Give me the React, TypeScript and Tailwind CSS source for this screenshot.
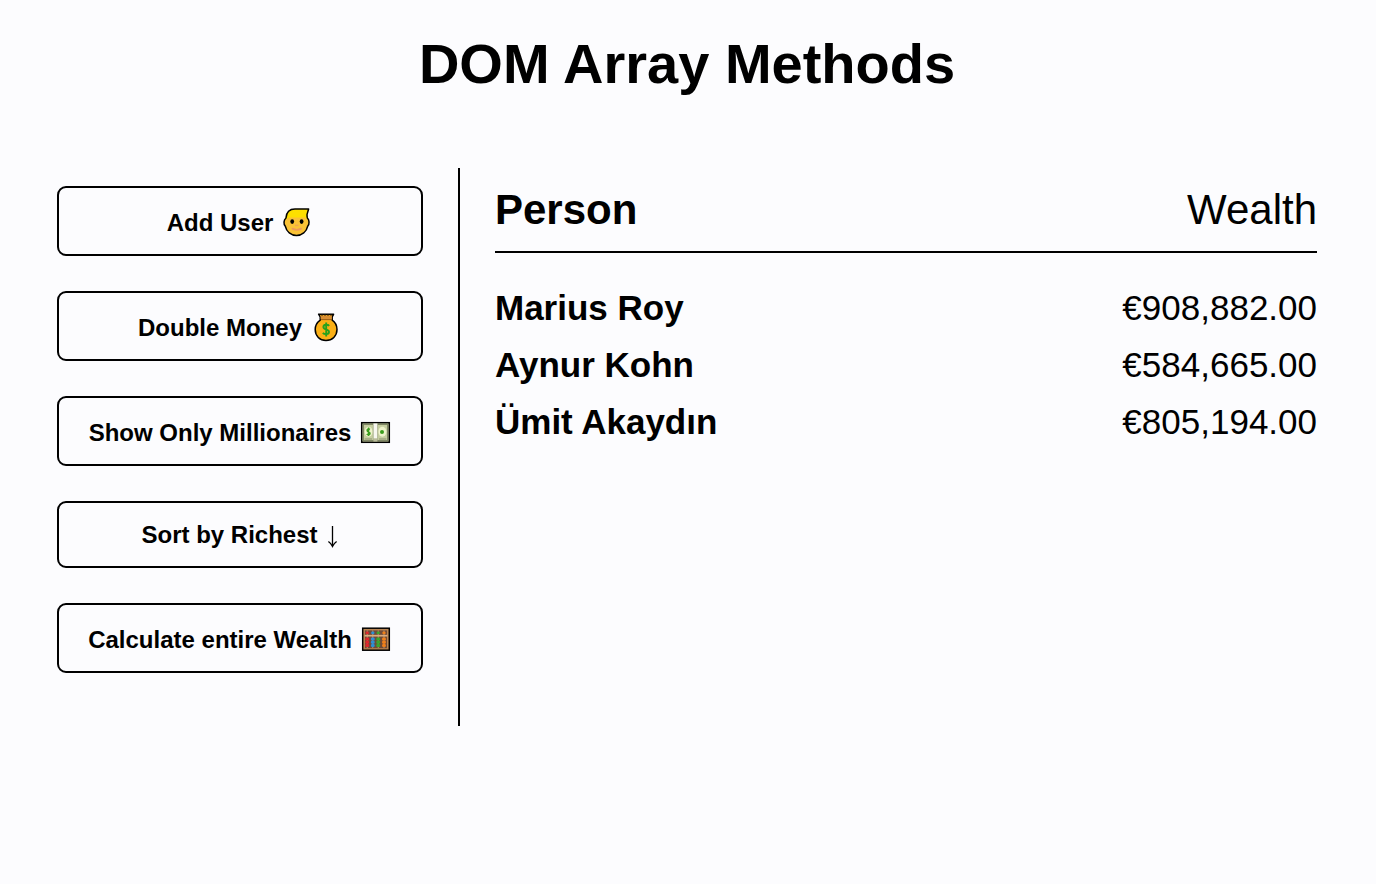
import type { ReactNode } from "react";

const iconClass = "h-[29px] w-8 shrink-0";

function FaceIcon() {
  return (
    <svg viewBox="0 0 32 29" className={iconClass} aria-hidden="true">
      <path
        d="M5 10C2.6 12 2.4 16 4.2 18C5.6 23.8 10 27.4 15.5 27.4C21 27.4 25.4 23.8 26.8 18C28.6 16 28.4 12 26.4 10L24.5 6H8Z"
        fill="#fac236"
      />
      <path d="M4.6 11.5C4.4 4.5 8.5 1 14 1H27.6L26.2 7.2L26.8 12L24 9.6H8Z" fill="#fde000" />
      <path
        d="M5 10C5.4 4.2 9 1 14 1H27.6L26 6.6C26 8 26.1 9 26.4 10C28.4 12 28.6 16 26.8 18C25.4 23.8 21 27.4 15.5 27.4C10 27.4 5.6 23.8 4.2 18C2.4 16 2.6 12 5 10Z"
        fill="none"
        stroke="#000"
        strokeWidth="1.5"
        strokeLinejoin="round"
      />
      <ellipse cx="11.2" cy="13.6" rx="1.9" ry="2.3" />
      <ellipse cx="20.6" cy="13.6" rx="1.9" ry="2.3" />
      <path d="M11.5 20.6Q15.7 23 20 20.6" fill="none" stroke="#ee9a5c" strokeWidth="1.8" strokeLinecap="round" />
      <path d="M14 17.4H17.4" stroke="#f0a552" strokeWidth="1.4" />
    </svg>
  );
}

function MoneyBagIcon() {
  return (
    <svg viewBox="0 0 32 29" className={iconClass} aria-hidden="true">
      <path
        d="M8.6 1.2H23.6L22.2 4V7.2C25.4 9.4 27 12.8 27 16.6C27 23 22.2 27.5 16 27.5C9.8 27.5 5.2 23 5.2 16.6C5.2 12.8 7.2 9.4 10.2 7.2V4Z"
        fill="#fbb016"
        stroke="#000"
        strokeWidth="1.5"
        strokeLinejoin="round"
      />
      <path d="M10.6 2.6H21.8V6.2H10.6Z" fill="#d98e32" />
      <path d="M12 1.4V3M15 1.4V3M18 1.4V3M21 1.4V3" stroke="#3b240c" strokeWidth="1" />
      <path d="M10.8 6.6H21.8" stroke="#8d5517" strokeWidth="0.9" />
      <path
        d="M19.2 12.8C17.8 11.2 13.4 11.2 13.4 14C13.4 17 19 15.8 19 18.9C19 21.6 14.4 21.6 12.8 19.8M16.2 9.6V23.4"
        fill="none"
        stroke="#28a11d"
        strokeWidth="1.9"
      />
    </svg>
  );
}

function BanknoteIcon() {
  return (
    <svg viewBox="0 0 32 29" className={iconClass} aria-hidden="true">
      <rect x="2.7" y="4.7" width="27.6" height="19.6" fill="#c6cfa0" stroke="#000" strokeWidth="1.5" />
      <rect x="4.4" y="6.4" width="24.2" height="16.2" fill="none" stroke="#777f5e" strokeWidth="1" />
      <ellipse cx="9.6" cy="13.8" rx="3.9" ry="5" fill="#eef3cb" />
      <ellipse cx="23.4" cy="13.8" rx="4" ry="5" fill="#eef3cb" />
      <path d="M14.4 5.4H18.4V20.5H14.4Z" fill="#f7f7ef" />
      <path d="M14.4 20.5H18.4V23.5H14.4Z" fill="#b9bb9b" />
      <path d="M14.2 7V22M18.6 7V22" stroke="#a3a88a" strokeWidth="0.7" />
      <path
        d="M11 11.4C9.4 10.4 7.8 11.4 8.2 12.8C8.6 14.2 11.2 13.8 11 15.6C10.8 17.2 8.6 17 7.8 16M9.6 9.6V18"
        fill="none"
        stroke="#3b9d1d"
        strokeWidth="1.5"
      />
      <circle cx="23" cy="14" r="2" fill="#3b9d1d" />
      <path d="M5.6 21H13M20 21H27.4" stroke="#8b9270" strokeWidth="1.2" />
    </svg>
  );
}

function DownArrowIcon() {
  return (
    <svg viewBox="0 0 13 29" className="h-[29px] w-[13px] shrink-0" aria-hidden="true">
      <path d="M6.5 6V26.4M2.4 21.6C4 22.8 5.6 24.4 6.5 26.4C7.4 24.4 9 22.8 10.6 21.6" fill="none" stroke="#000" strokeWidth="1.3" />
    </svg>
  );
}

const beads = [
  { x: 7.2, color: "#e0262b" },
  { x: 12.8, color: "#2b8fd6" },
  { x: 18.2, color: "#3aa52c" },
  { x: 24, color: "#ef7f1a" },
];

function AbacusIcon() {
  return (
    <svg viewBox="0 0 32 29" className={iconClass} aria-hidden="true">
      <rect x="2.7" y="3.2" width="26.6" height="22" fill="#b98552" stroke="#000" strokeWidth="1.5" />
      <rect x="5" y="5.4" width="22" height="17.8" fill="#6e4b38" />
      {beads.map((bead) => (
        <g key={bead.color} fill={bead.color}>
          <rect x={bead.x - 0.4} y="5.4" width="0.8" height="17.6" fill="#caa27a" />
          <rect x={bead.x - 1.6} y="6.4" width="3.2" height="2.8" rx="1.2" />
          <rect x={bead.x - 1.9} y="12.6" width="3.8" height="3" rx="1.2" />
          <rect x={bead.x - 1.9} y="15.8" width="3.8" height="3" rx="1.2" />
          <rect x={bead.x - 1.9} y="19" width="3.8" height="3" rx="1.2" />
        </g>
      ))}
      <path d="M4.6 10.7H27.4" stroke="#dbab7c" strokeWidth="1.7" />
    </svg>
  );
}

function ActionButton({ label, children }: { label: string; children: ReactNode }) {
  return (
    <button
      type="button"
      className="flex cursor-pointer items-center justify-center gap-2 rounded-[9px] border-2 border-black pt-5 pb-[17px] text-2xl leading-[29px] font-bold whitespace-nowrap"
    >
      {label}
      {children}
    </button>
  );
}

const people = [
  { name: "Marius Roy", wealth: "€908,882.00" },
  { name: "Aynur Kohn", wealth: "€584,665.00" },
  { name: "Ümit Akaydın", wealth: "€805,194.00" },
];

export default function App() {
  return (
    <div className="min-h-screen bg-[#fcfcfe] pt-8 pr-[59px] pl-[57px] font-['Liberation_Sans',Arial,sans-serif] text-black">
      <h1 className="text-center text-[56px] leading-[64px] font-bold">DOM Array Methods</h1>

      <div className="mt-[72px] flex">
        <aside className="flex w-[403px] shrink-0 flex-col gap-[35px] border-r-2 border-black pt-[18px] pr-[35px] pb-[53px]">
          <ActionButton label="Add User">
            <FaceIcon />
          </ActionButton>
          <ActionButton label="Double Money">
            <MoneyBagIcon />
          </ActionButton>
          <ActionButton label="Show Only Millionaires">
            <BanknoteIcon />
          </ActionButton>
          <button
            type="button"
            className="flex cursor-pointer items-center justify-center gap-2 rounded-[9px] border-2 border-black py-[17px] text-2xl leading-[29px] font-bold whitespace-nowrap"
          >
            Sort by Richest
            <DownArrowIcon />
          </button>
          <ActionButton label="Calculate entire Wealth">
            <AbacusIcon />
          </ActionButton>
        </aside>

        <main className="min-w-0 flex-1 pt-[18px] pl-[35px]">
          <table className="w-full border-collapse">
            <thead>
              <tr className="border-b-2 border-black text-[42px] leading-[48px]">
                <th scope="col" className="p-0 pb-[17px] text-left font-bold">
                  Person
                </th>
                <th scope="col" className="p-0 pb-[17px] text-right font-normal">
                  Wealth
                </th>
              </tr>
            </thead>
            <tbody className="text-[35px] leading-[41px] before:block before:h-[26px] before:content-['']">
              {people.map((person) => (
                <tr key={person.name}>
                  <th scope="row" className="px-0 py-2 text-left font-bold">
                    {person.name}
                  </th>
                  <td className="px-0 py-2 text-right">{person.wealth}</td>
                </tr>
              ))}
            </tbody>
          </table>
        </main>
      </div>
    </div>
  );
}
